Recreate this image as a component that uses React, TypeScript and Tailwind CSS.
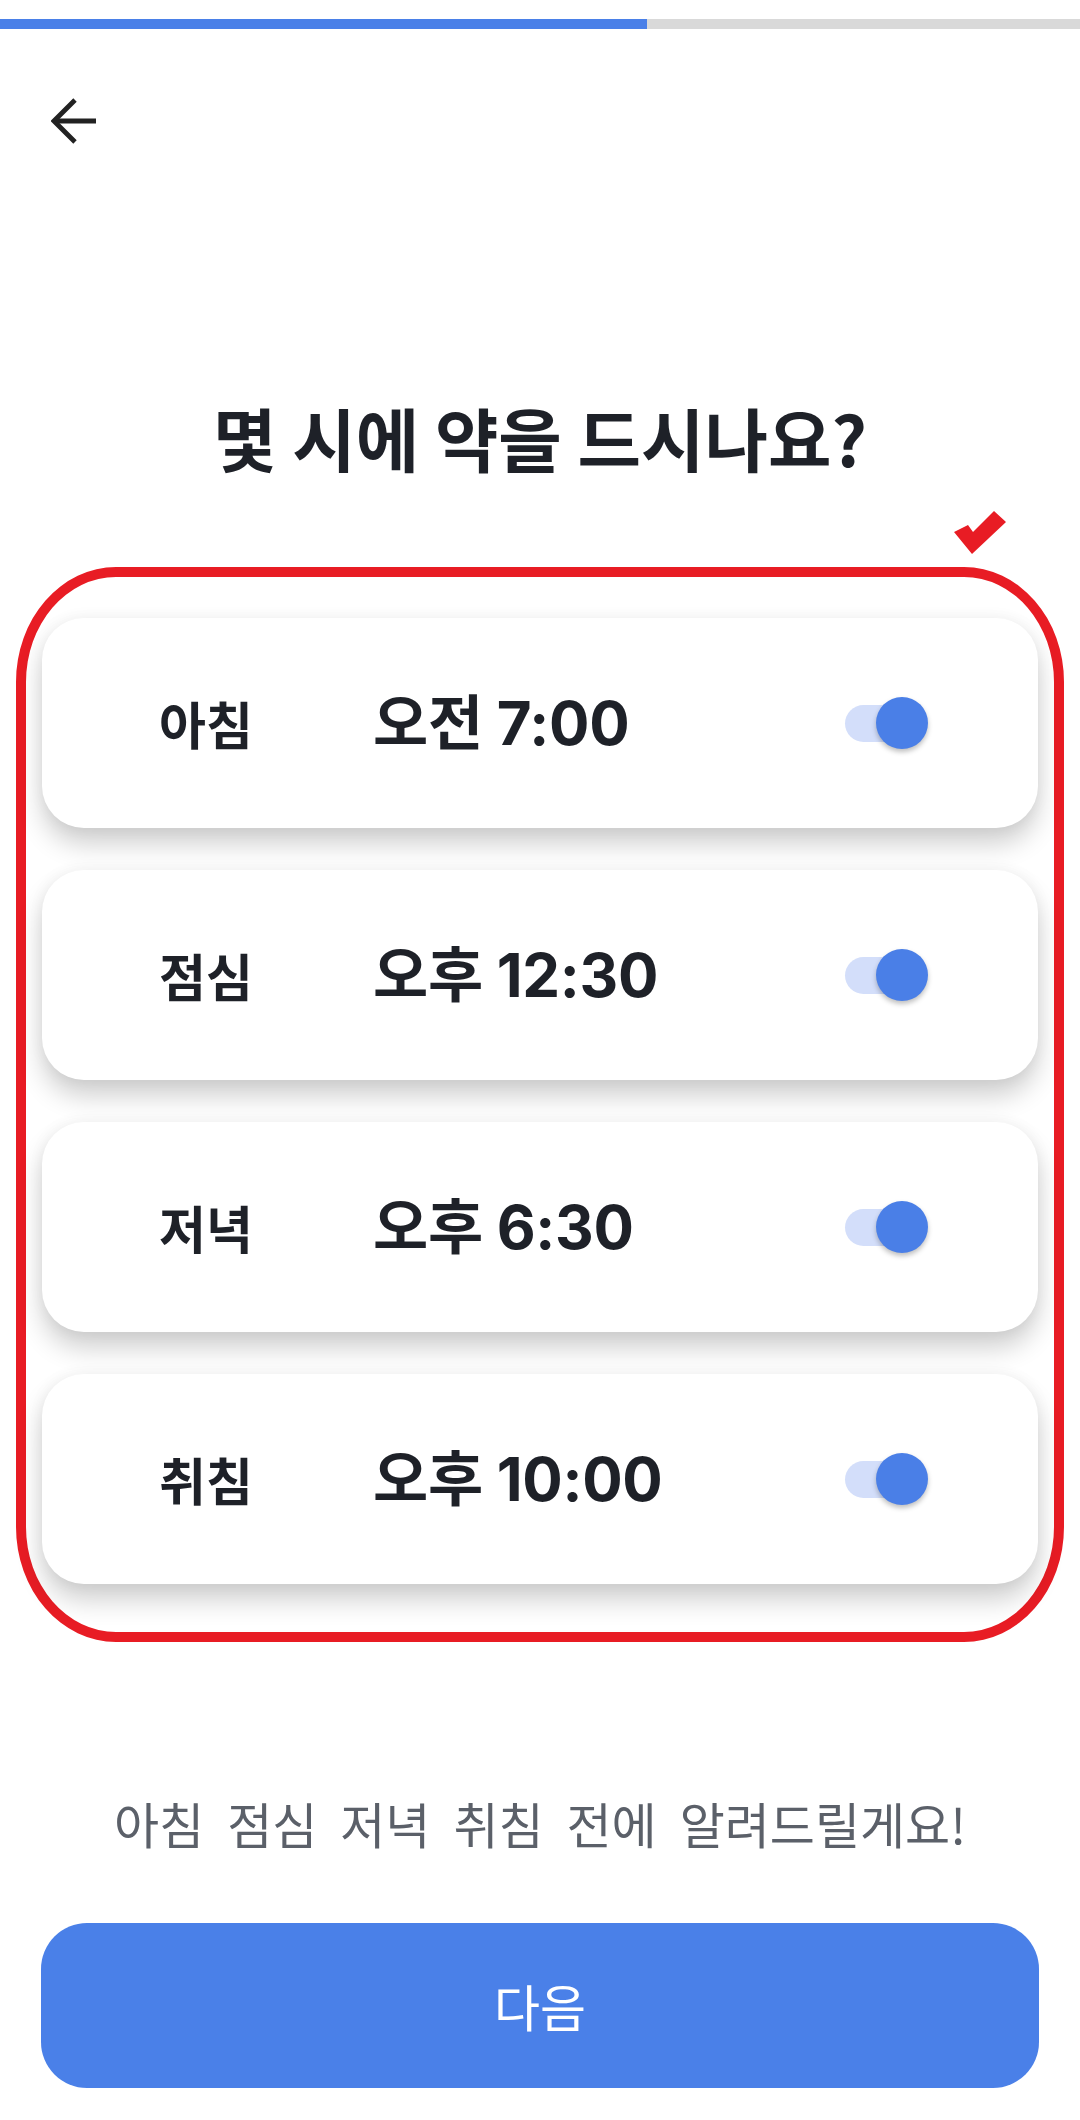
import React from "react"

const slots = [
  { label: "아침", time: "오전 7:00" },
  { label: "점심", time: "오후 12:30" },
  { label: "저녁", time: "오후 6:30" },
  { label: "취침", time: "오후 10:00" },
]

function Toggle() {
  return (
    <div className="relative w-[70px] h-[37px]">
      <div className="absolute inset-0 rounded-full bg-[#d3defa]" />
      <div className="absolute top-[-8px] left-[31px] w-[52px] h-[52px] rounded-full bg-[#4a7fe7] shadow-[0_3px_5px_rgba(0,0,0,0.25)]" />
    </div>
  )
}

export default function App() {
  return (
    <div
      className="w-[1080px] h-[2120px] bg-white flex flex-col text-[#1e2128]"
      style={{ fontFamily: '"Noto Sans CJK KR", "Noto Sans", sans-serif' }}
    >
      {/* progress */}
      <div className="pt-[19px]">
        <div className="h-[10px] bg-[#d9d9d9] flex">
          <div className="w-[647px] bg-[#4a80e8]" />
        </div>
      </div>

      {/* back */}
      <div className="pl-[51px] pt-[69px]">
        <svg width="48" height="46" viewBox="0 0 48 46" fill="none" stroke="#222" strokeWidth="4.8">
          <polyline points="24,2 3,23 24,44" strokeLinejoin="miter" />
          <line x1="3" y1="23" x2="45" y2="23" />
        </svg>
      </div>

      <h1 className="mt-[253px] text-center text-[69px] leading-[80px] font-bold">
        몇 시에 약을 드시나요?
      </h1>

      {/* time slots */}
      <div className="relative mx-[16px] mt-[90px] border-[10px] border-[#e81c24] rounded-[100px/115px] px-[16px] pt-[41px] pb-[48px] flex flex-col gap-[42px]">
        <svg className="absolute left-[924px] top-[-69px]" width="60" height="50" viewBox="0 0 60 50">
          <polygon points="4,24 18,17 23,24 44,3 56,14 22,46" fill="#e81c24" />
        </svg>
        {slots.map((s) => (
          <div
            key={s.label}
            className="h-[210px] rounded-[42px] bg-white flex items-center shadow-[0_16px_26px_rgba(0,0,0,0.19),0_0_16px_rgba(0,0,0,0.05)]"
          >
            <span className="ml-[117px] w-[214px] text-[51px] font-bold leading-none">{s.label}</span>
            <span
              className="text-[60px] font-bold leading-none tracking-[-0.3px]"
              style={{ fontFamily: 'Inter, "Noto Sans CJK KR", sans-serif' }}
            >
              {s.time}
            </span>
            <div className="ml-auto mr-[123px]">
              <Toggle />
            </div>
          </div>
        ))}
      </div>

      <p className="mt-[151px] text-center text-[49px] leading-[60px] text-[#5b6069] [word-spacing:12px]">
        아침 점심 저녁 취침 전에 알려드릴게요!
      </p>

      <button className="mt-[70px] mx-[41px] h-[165px] rounded-[46px] bg-[#4a80e8] text-white text-[50px] flex items-center justify-center">
        다음
      </button>
    </div>
  )
}
